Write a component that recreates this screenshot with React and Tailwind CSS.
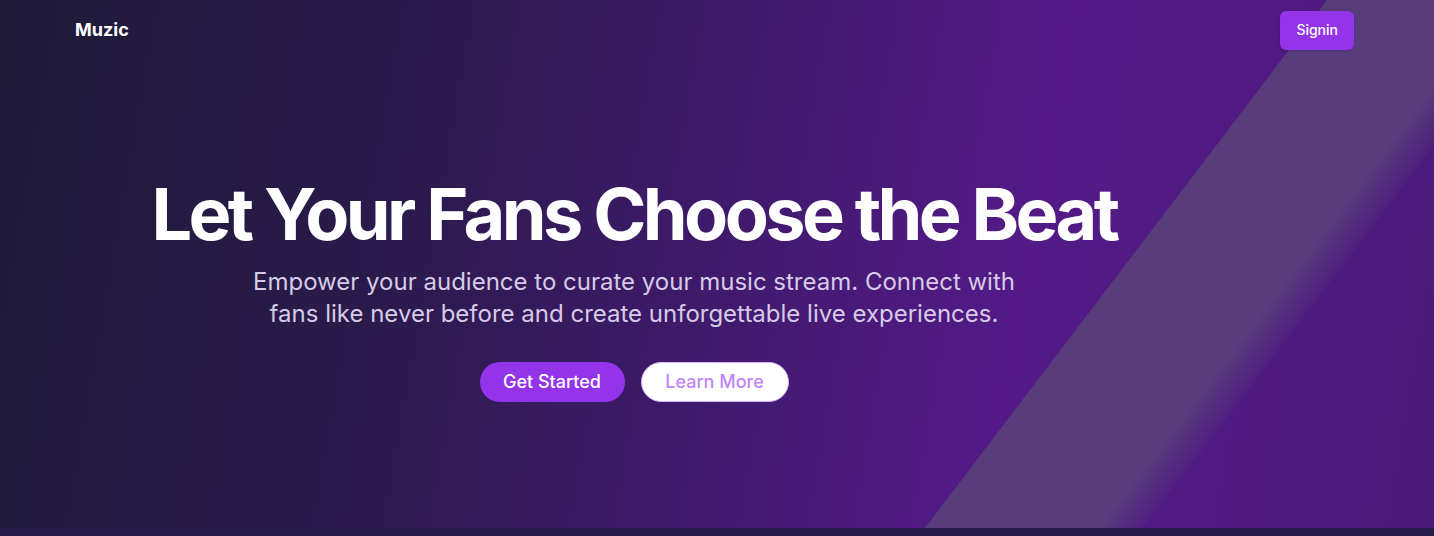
import React from "react";

const Band = () => (
  <svg
    className="absolute inset-0 h-full w-full"
    viewBox="0 0 1434 528"
    preserveAspectRatio="none"
    aria-hidden="true"
  >
    <defs>
      <linearGradient
        id="bandFade"
        gradientUnits="userSpaceOnUse"
        x1="925"
        y1="528"
        x2="1063"
        y2="633"
      >
        <stop offset="0" stopColor="#583c7b" />
        <stop offset="0.8" stopColor="#583c7b" />
        <stop offset="1" stopColor="#583c7b" stopOpacity="0.15" />
      </linearGradient>
    </defs>
    <polygon points="1327,0 1545,0 1143,528 925,528" fill="url(#bandFade)" />
  </svg>
);

export default function App() {
  return (
    <div className="min-h-screen bg-[#281e4c] font-['Inter','Noto_Sans',sans-serif]">
      {/* HERO */}
      <div className="relative h-[528px] overflow-hidden bg-[linear-gradient(100deg,#1d1a37_0%,#2b1a4c_28%,#441a73_55%,#531a87_70%,#4f1a81_85%,#4a1a79_100%)]">
        <Band />

        <div className="relative flex h-full flex-col">
          {/* NAV */}
          <header className="flex h-[60px] items-center justify-between pl-[75px] pr-[80px]">
            <span className="text-lg font-bold text-white">Muzic</span>
            <button className="h-[39px] rounded-md bg-[#9333ea] px-4 text-sm font-medium text-white shadow-sm">
              Signin
            </button>
          </header>

          {/* CONTENT */}
          <section className="flex flex-col items-center pt-[118px] pr-[166px] text-center">
            <h1 className="text-7xl font-bold tracking-tighter text-white">
              Let Your Fans Choose the Beat
            </h1>
            <p className="mt-4 max-w-3xl text-2xl text-[#d6cbe6]">
              Empower your audience to curate your music stream. Connect with
              fans like never before and create unforgettable live experiences.
            </p>
            <div className="mt-8 flex gap-4">
              <button className="h-10 w-[145px] rounded-full bg-[#9333ea] text-lg font-medium text-white">
                Get Started
              </button>
              <button className="h-10 w-[148px] rounded-full border border-[#d8b4fe] bg-white text-lg font-medium text-[#c084fc]">
                Learn More
              </button>
            </div>
          </section>
        </div>
      </div>
    </div>
  );
}
